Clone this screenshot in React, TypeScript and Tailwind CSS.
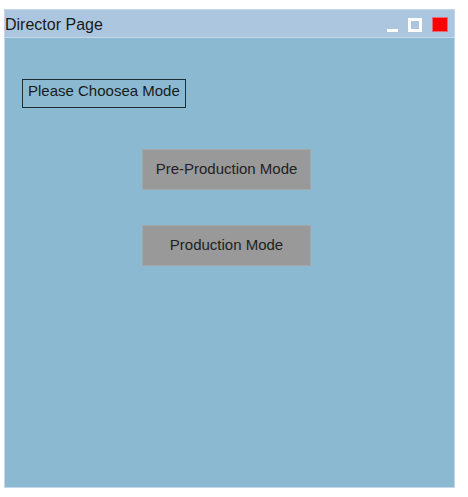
export default function App() {
  return (
    <div className="w-[468px] h-[497px] bg-white pt-[9px] pl-[4px]" style={{ fontFamily: '"Liberation Sans", Arial, sans-serif' }}>
      <div className="w-[451px] h-[479px] border border-[#c4d6e8] flex flex-col">
        <div className="h-[28px] bg-[#adc6e0] border-b border-[#c8d9ea] flex items-center justify-between">
          <span className="text-[16px] text-[#1a1a1a] leading-none pt-[3px]">Director Page</span>
          <div className="flex items-end gap-[10px] pr-[6px] pt-[2px]">
            <div className="w-[11px] h-[3px] bg-white" />
            <div className="w-[14px] h-[14px] border-[3px] border-white bg-[#adc6e0]" />
            <div className="w-[16px] h-[15px] bg-[#ff0000] border border-[#e06b7a]" />
          </div>
        </div>
        <div className="flex-1 bg-[#8bb9d1]">
          <div className="pt-[41px] pl-[17px]">
            <div className="inline-block border border-[#1e2c34] h-[29px] px-[5px] text-[15px] leading-[22px] text-[#1a1a1a]">
              Please Choosea Mode
            </div>
          </div>
          <div className="flex flex-col items-start gap-[35px] mt-[41px] pl-[137px]">
            <div className="w-[169px] h-[41px] bg-[#999999] border border-[#a3a7aa] flex items-center justify-center text-[15px] text-[#222]">
              Pre-Production Mode
            </div>
            <div className="w-[169px] h-[41px] bg-[#999999] border border-[#a3a7aa] flex items-center justify-center text-[15px] text-[#222]">
              Production Mode
            </div>
          </div>
        </div>
      </div>
    </div>
  );
}
